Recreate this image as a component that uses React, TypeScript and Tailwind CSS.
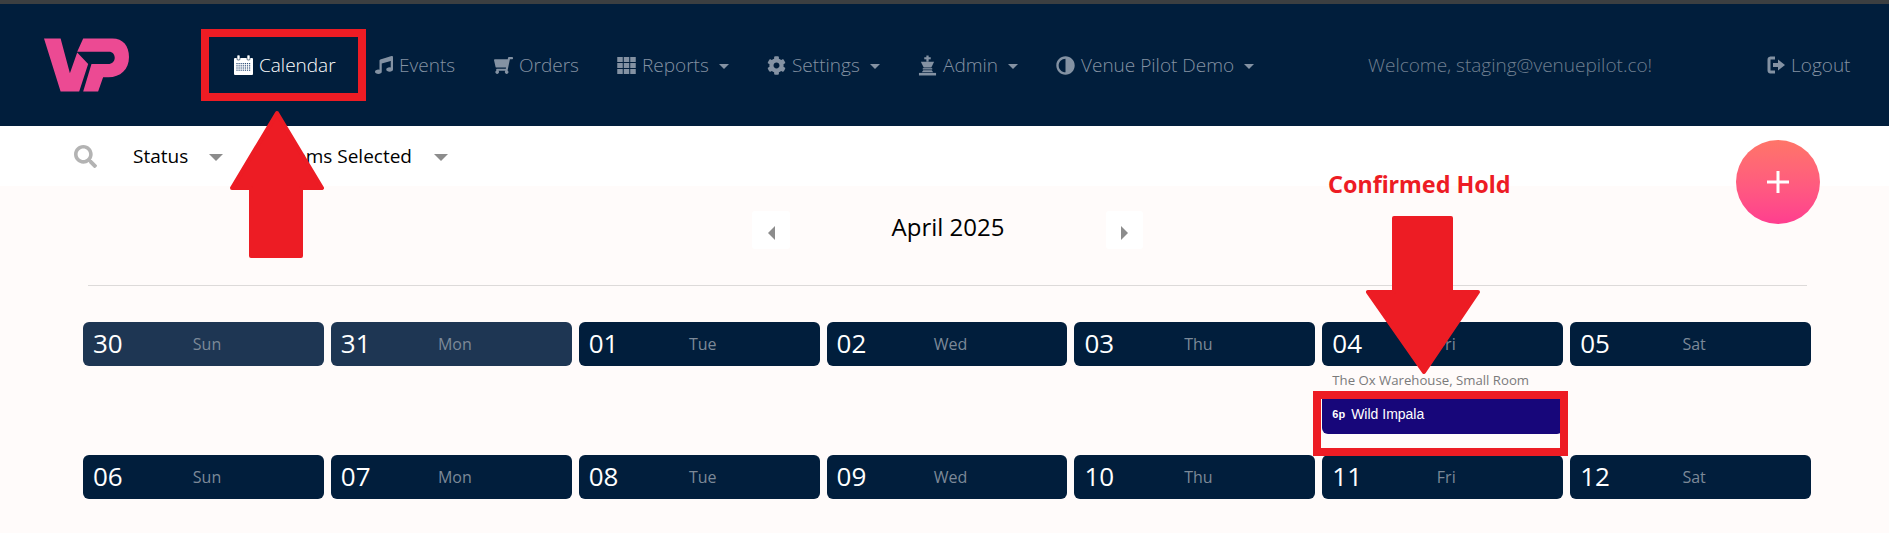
import React from "react";
import { FaMusic, FaShoppingCart, FaCog, FaAdjust, FaSearch } from "react-icons/fa";

function CalendarIcon() {
  const dots: React.ReactNode[] = [];
  for (let r = 0; r < 4; r++) {
    for (let c = 0; c < 7; c++) {
      dots.push(<rect key={`${r}-${c}`} x={2.4 + c * 2.1} y={8 + r * 2.2} width="1.2" height="1.2" fill="#30507a" />);
    }
  }
  return (
    <svg width="19" height="20" viewBox="0 0 19 20" className="shrink-0">
      <path d="M1 3h17a1 1 0 0 1 1 1v15a1 1 0 0 1-1 1H1a1 1 0 0 1-1-1V4a1 1 0 0 1 1-1z" fill="#fff" />
      <rect x="3" y="0" width="3" height="5" rx="1" fill="#fff" stroke="#011e3c" strokeWidth="0.6" />
      <rect x="13" y="0" width="3" height="5" rx="1" fill="#fff" stroke="#011e3c" strokeWidth="0.6" />
      {dots}
    </svg>
  );
}

function GridIcon() {
  const cells: React.ReactNode[] = [];
  for (let r = 0; r < 3; r++) {
    for (let c = 0; c < 3; c++) {
      cells.push(<rect key={`${r}-${c}`} x={c * 6.5} y={r * 6} width="5.5" height="5" fill="#8492a3" />);
    }
  }
  return (
    <svg width="19" height="17" viewBox="0 0 18.5 17" className="shrink-0">
      {cells}
    </svg>
  );
}

function KingIcon() {
  return (
    <svg width="19" height="21" viewBox="0 0 20 21" className="shrink-0" fill="#8492a3">
      <rect x="8.8" y="0" width="2.4" height="6.5" />
      <rect x="6.6" y="1.8" width="6.8" height="2.2" />
      <path d="M3 6.5h14l-3 6H6z" />
      <rect x="5" y="13.3" width="10" height="1.4" />
      <path d="M5.5 15.5h9l1.5 2H4z" />
      <rect x="1" y="18.3" width="18" height="2.7" />
    </svg>
  );
}

function LogoutIcon() {
  return (
    <svg width="18" height="18" viewBox="0 0 18 18" className="shrink-0">
      <path d="M8 2H3.5A1.8 1.8 0 0 0 2 3.8v10.4A1.8 1.8 0 0 0 3.5 16H8" fill="none" stroke="#8492a3" strokeWidth="3" />
      <path d="M6 7h5V3.5L18 9l-7 5.5V11H6z" fill="#8492a3" />
    </svg>
  );
}

function Logo() {
  return (
    <svg width="85" height="54" viewBox="72 55 256 160" className="shrink-0">
      <path d="M72 55h50l28 105 22-63 33 35-27 83h-56z" fill="#ec4a93" />
      <path d="M172 95l18-40h88c32 0 50 22 50 56 0 38-26 61-62 61h-16l-15 43h-45l25-83h50c12 0 20-8 20-19 0-10-6-18-18-18z" fill="#ec4a93" />
    </svg>
  );
}

function NavCaret() {
  return <span className="ml-[10px] mt-[3px] shrink-0 w-0 h-0 border-x-[5px] border-x-transparent border-t-[5px] border-t-[#8492a3]" />;
}

function FilterCaret() {
  return <span className="mt-[3px] shrink-0 w-0 h-0 border-x-[7px] border-x-transparent border-t-[7px] border-t-[#8c8c8c]" />;
}

function NavItem(props: { width: string; icon: React.ReactNode; label: string; caret?: boolean; active?: boolean }) {
  return (
    <div className={`${props.width} shrink-0 flex items-center`}>
      {props.icon}
      <span className={props.active ? "ml-[6px] text-white" : "ml-[6px]"}>{props.label}</span>
      {props.caret ? <NavCaret /> : null}
    </div>
  );
}

function DayCard(props: { num: string; day: string; past?: boolean }) {
  return (
    <div className={props.past ? "h-[44px] pb-[2px] rounded-[6px] bg-[#1e3653] flex items-center" : "h-[44px] pb-[2px] rounded-[6px] bg-[#011e3c] flex items-center"}>
      <span className="w-[84px] pl-[10px] text-[26px] leading-[34px] text-white">{props.num}</span>
      <span className="w-[80px] text-center text-[16px] mt-[2px] text-[#7c8998]">{props.day}</span>
    </div>
  );
}

const row1 = [
  ["30", "Sun", true],
  ["31", "Mon", true],
  ["01", "Tue", false],
  ["02", "Wed", false],
  ["03", "Thu", false],
  ["04", "Fri", false],
  ["05", "Sat", false],
] as const;

const row2 = [
  ["06", "Sun"],
  ["07", "Mon"],
  ["08", "Tue"],
  ["09", "Wed"],
  ["10", "Thu"],
  ["11", "Fri"],
  ["12", "Sat"],
] as const;

export default function App() {
  return (
    <div className="relative w-[1889px] h-[533px] overflow-hidden bg-[#fffbfa] font-['Open_Sans',sans-serif]">
      <div className="h-[4px] bg-[#3c3f41]" />
      <nav className="h-[122px] bg-[#011e3c] flex items-center pl-[44px] text-[19px] font-light text-[#8492a3]">
        <div className="w-[190px] shrink-0 flex items-center"><Logo /></div>
        <NavItem width="w-[141px]" active label="Calendar" icon={<CalendarIcon />} />
        <NavItem width="w-[119px]" label="Events" icon={<FaMusic className="text-[18px] shrink-0 text-[#8492a3]" />} />
        <NavItem width="w-[123px]" label="Orders" icon={<FaShoppingCart className="text-[19px] shrink-0 -scale-x-100 text-[#8492a3]" />} />
        <NavItem width="w-[150px]" caret label="Reports" icon={<GridIcon />} />
        <NavItem width="w-[151px]" caret label="Settings" icon={<FaCog className="text-[19px] shrink-0 text-[#8492a3]" />} />
        <NavItem width="w-[138px]" caret label="Admin" icon={<KingIcon />} />
        <NavItem width="w-[312px]" caret label="Venue Pilot Demo" icon={<FaAdjust className="text-[19px] shrink-0 -scale-x-100 text-[#8492a3]" />} />
        <div className="w-[399px] shrink-0 text-[#6f7e90]">Welcome, staging@venuepilot.co!</div>
        <NavItem width="w-[90px]" label="Logout" icon={<LogoutIcon />} />
      </nav>

      <div className="h-[60px] bg-white flex items-center pl-[74px] text-[19px] text-black">
        <FaSearch className="text-[23px] text-[#b3b3b3] shrink-0" />
        <span className="ml-[36px] w-[76px]">Status</span>
        <FilterCaret />
        <span className="w-[189px] text-right">Items Selected</span>
        <span className="ml-[22px] flex"><FilterCaret /></span>
      </div>

      <main>
        <div className="mt-[25px] ml-[752px] flex items-center h-[38px]">
          <div className="w-[38px] h-[38px] bg-white rounded-[3px] flex items-center justify-center">
            <span className="mt-[6px] w-0 h-0 border-y-[7px] border-y-transparent border-r-[7px] border-r-[#8c8c8c]" />
          </div>
          <div className="w-[316px] -mt-[7px] text-center text-[24px] text-black">April 2025</div>
          <div className="w-[37px] h-[38px] bg-white rounded-[3px] flex items-center justify-center">
            <span className="mt-[6px] w-0 h-0 border-y-[7px] border-y-transparent border-l-[7px] border-l-[#8c8c8c]" />
          </div>
        </div>
        <div className="mt-[36px] ml-[88px] w-[1719px] h-px bg-[#dddad9]" />
        <div className="mt-[36px] ml-[83px] w-[1728px] grid grid-cols-7 gap-x-[7px] auto-rows-[133px]">
          {row1.map(([n, d, p]) => (
            <div key={n}>
              <DayCard num={n} day={d} past={p} />
              {n === "04" ? (
                <div>
                  <div className="mt-[6px] pl-[10px] text-[13.2px] leading-[16px] text-[#7a7a7a]">The Ox Warehouse, Small Room</div>
                  <div className="mt-[11px] h-[35px] rounded-b-[6px] bg-[#17067a] flex items-center pb-[4px] pl-[10px] text-white font-['Liberation_Sans',sans-serif]">
                    <span className="text-[11px] font-bold">6p</span>
                    <span className="ml-[6px] text-[14px]">Wild Impala</span>
                  </div>
                </div>
              ) : null}
            </div>
          ))}
          {row2.map(([n, d]) => (
            <div key={n}>
              <DayCard num={n} day={d} />
            </div>
          ))}
        </div>
      </main>

      <button className="absolute left-[1736px] top-[140px] w-[84px] h-[84px] rounded-full bg-gradient-to-b from-[#ff7568] to-[#ff3d8f] flex items-center justify-center">
        <svg width="22" height="22" viewBox="0 0 22 22"><path d="M11 0v22M0 11h22" stroke="#fff" strokeWidth="3" /></svg>
      </button>

      <div className="absolute left-[201px] top-[29px] w-[165px] h-[72px] border-[8px] border-[#ed1c24]" />
      <svg className="absolute left-[228px] top-[109px]" width="98" height="151" viewBox="0 0 98 151">
        <path d="M49 4L94 79H73V147H23V79H4z" fill="#ed1c24" stroke="#ed1c24" strokeWidth="4" strokeLinejoin="round" />
      </svg>

      <div className="absolute left-[1328px] top-[168px] text-[23.3px] leading-[32px] font-bold text-[#ed1c24] font-['Noto_Sans',sans-serif]">Confirmed Hold</div>
      <svg className="absolute left-[1364px] top-[215px]" width="118" height="161" viewBox="0 0 118 161">
        <path d="M30 3H87V77H114L60 157L4 77H30z" fill="#ed1c24" stroke="#ed1c24" strokeWidth="4" strokeLinejoin="round" />
      </svg>
      <div className="absolute left-[1313px] top-[391px] w-[255px] h-[65px] border-[8px] border-[#ed1c24]" />
    </div>
  );
}
